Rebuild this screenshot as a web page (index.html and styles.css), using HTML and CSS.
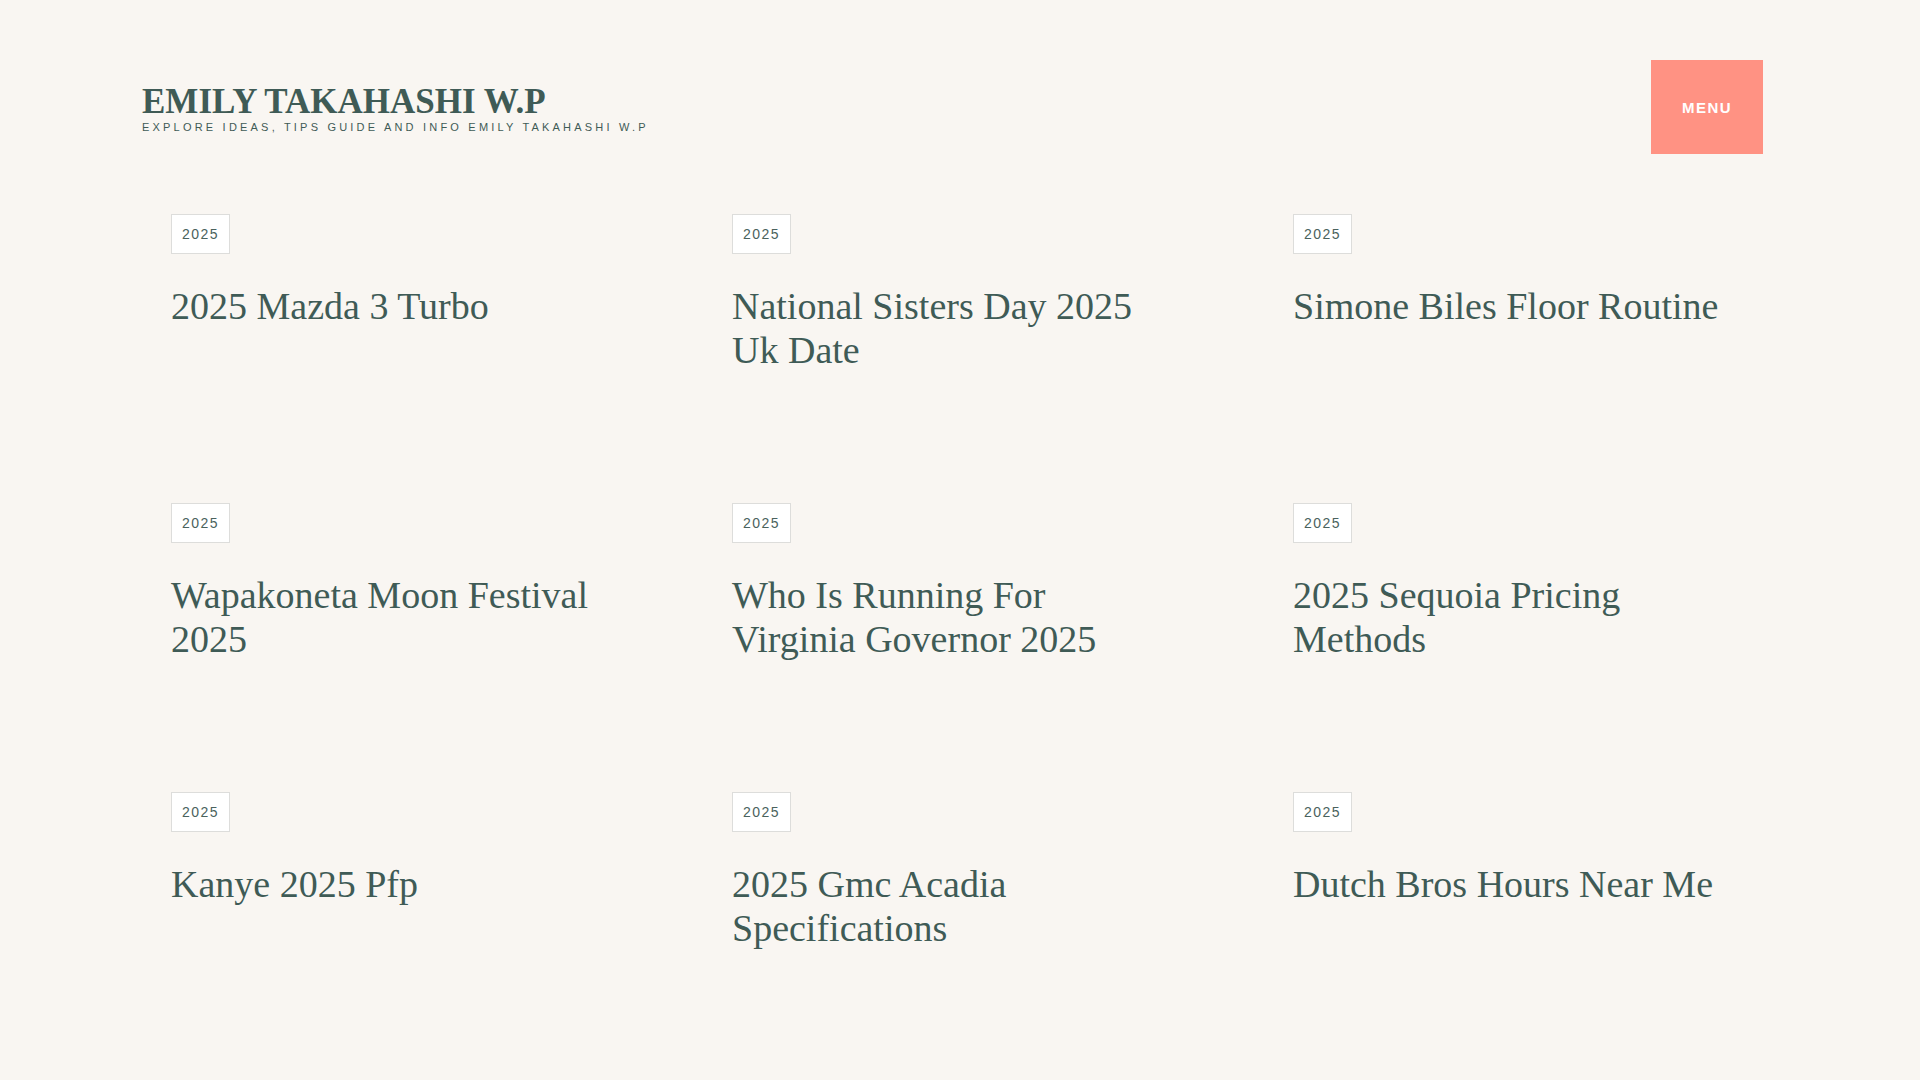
FILE: index.html
```html
<!DOCTYPE html>
<html lang="en">
<head>
    <meta charset="utf-8">
    <title>Emily Takahashi W.P</title>
    <link rel="stylesheet" href="styles.css">
</head>
<body>
    <div class="wrap">
        <header class="site_header">
            <div class="branding">
                <a class="site_title" href="#">EMILY TAKAHASHI W.P</a>
                <p class="tagline">Explore Ideas, Tips Guide and Info Emily Takahashi W.P</p>
            </div>
            <button class="menu_button">MENU</button>
        </header>

        <main class="post_grid">
            <article class="post">
                <a class="cat_badge" href="#">2025</a>
                <h2 class="post_title"><a href="#">2025 Mazda 3 Turbo</a></h2>
            </article>
            <article class="post">
                <a class="cat_badge" href="#">2025</a>
                <h2 class="post_title"><a href="#">National Sisters Day 2025 Uk Date</a></h2>
            </article>
            <article class="post">
                <a class="cat_badge" href="#">2025</a>
                <h2 class="post_title"><a href="#">Simone Biles Floor Routine</a></h2>
            </article>

            <article class="post">
                <a class="cat_badge" href="#">2025</a>
                <h2 class="post_title"><a href="#">Wapakoneta Moon Festival 2025</a></h2>
            </article>
            <article class="post">
                <a class="cat_badge" href="#">2025</a>
                <h2 class="post_title"><a href="#">Who Is Running For Virginia Governor 2025</a></h2>
            </article>
            <article class="post">
                <a class="cat_badge" href="#">2025</a>
                <h2 class="post_title"><a href="#">2025 Sequoia Pricing Methods</a></h2>
            </article>

            <article class="post">
                <a class="cat_badge" href="#">2025</a>
                <h2 class="post_title"><a href="#">Kanye 2025 Pfp</a></h2>
            </article>
            <article class="post">
                <a class="cat_badge" href="#">2025</a>
                <h2 class="post_title"><a href="#">2025 Gmc Acadia Specifications</a></h2>
            </article>
            <article class="post">
                <a class="cat_badge" href="#">2025</a>
                <h2 class="post_title"><a href="#">Dutch Bros Hours Near Me</a></h2>
            </article>

            <article class="post">
                <a class="cat_badge" href="#">2025</a>
                <h2 class="post_title"><a href="#">Jeep Grand Cherokee 2025 Colors</a></h2>
            </article>
            <article class="post">
                <a class="cat_badge" href="#">2025</a>
                <h2 class="post_title"><a href="#">2025 Honda Pilot Trim Levels</a></h2>
            </article>
            <article class="post">
                <a class="cat_badge" href="#">2025</a>
                <h2 class="post_title"><a href="#">Easter Sunday 2025 Date</a></h2>
            </article>
        </main>

        <footer class="site_footer">
            <p>&copy; 2025 Emily Takahashi W.P</p>
        </footer>
    </div>
</body>
</html>
```

FILE: styles.css
```css
body{
    margin:0;
    padding-right:15px;
    background-color:#f9f6f2;
    color:#3f5b56;
    font-family:"Liberation Serif", "Times New Roman", serif;
}

a{
    color:inherit;
    text-decoration:none;
}

.wrap{
    width:1621px;
    margin:0 auto;
}

.site_header{
    display:flex;
    flex-direction:row;
    justify-content:space-between;
    align-items:center;
    padding-top:60px;
}

.branding{
    display:flex;
    flex-direction:column;
    padding-top:2px;
}

.site_title{
    font-size:35px;
    font-weight:bold;
    line-height:35px;
}

.tagline{
    margin:3px 0 0 0;
    font-family:"Liberation Sans", Arial, sans-serif;
    font-size:11px;
    line-height:11px;
    letter-spacing:3.2px;
    text-transform:uppercase;
}

.menu_button{
    width:112px;
    height:94px;
    border:none;
    border-radius:0;
    background-color:#ff9283;
    color:white;
    font-family:"Liberation Sans", Arial, sans-serif;
    font-size:15px;
    font-weight:bold;
    letter-spacing:1.5px;
    cursor:pointer;
}

.post_grid{
    display:grid;
    grid-template-columns:repeat(3, 436px);
    column-gap:125px;
    row-gap:131px;
    margin-top:60px;
    padding-left:29px;
}

.post{
    display:flex;
    flex-direction:column;
    align-items:flex-start;
}

.cat_badge{
    display:block;
    padding:10px 10px;
    background-color:white;
    border:1px solid #dddddb;
    color:#4a625d;
    font-family:"Liberation Sans", Arial, sans-serif;
    font-size:14px;
    line-height:18px;
    letter-spacing:1.5px;
}

.post_title{
    margin:30px 0 0 0;
    font-size:38px;
    font-weight:normal;
    line-height:44px;
}

.site_footer{
    padding:300px 0 200px 29px;
    font-family:"Liberation Sans", Arial, sans-serif;
    font-size:14px;
}
```
